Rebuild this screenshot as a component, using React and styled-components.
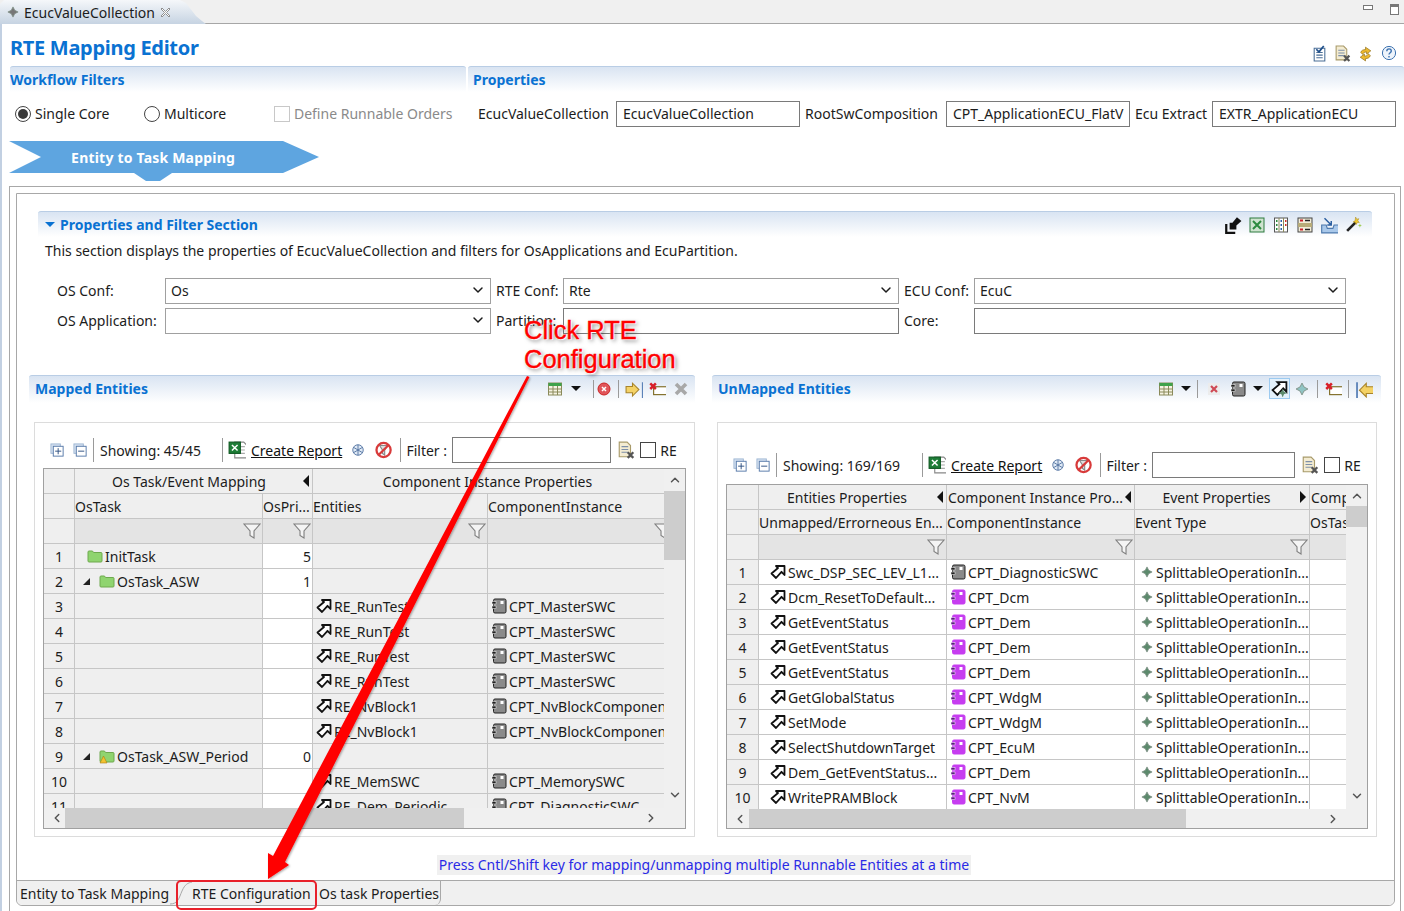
import React from 'react'
import styled, { createGlobalStyle } from 'styled-components'
import { ChevronDown, ChevronUp, ChevronLeft, ChevronRight } from 'lucide-react'

const Global = createGlobalStyle`
  html, body { margin: 0; padding: 0; background: #fff; }
  body { font-family: "Noto Sans", "Open Sans", sans-serif; font-size: 14px; color: #1c1c1c; }
  * { box-sizing: border-box; }
`

const Page = styled.div`
  width: 1404px;
  height: 911px;
  position: relative;
  overflow: hidden;
  background: #fff;
`
const TabStrip = styled.div`
  height: 24px;
  background: #f0f0f0;
  border-bottom: 1px solid #a6a6a6;
  display: flex;
  justify-content: space-between;
`
const EditorTab = styled.div`
  width: 206px;
  height: 24px;
  padding-left: 7px;
  display: flex;
  align-items: center;
  gap: 5px;
  background: linear-gradient(#f5f7fa, #c6d3e2);
  clip-path: polygon(0 4px, 4px 0, 180px 0, 186px 3px, 196px 16px, 202px 21px, 206px 24px, 0 24px);
  font-size: 14px;
`
const WindowButtons = styled.div`
  display: flex;
  gap: 17px;
  padding: 4px 5px 0 0;
`
const MinBtn = styled.div`
  width: 10px;
  height: 5px;
  margin-top: 1px;
  border: 1px solid #777;
  background: #fff;
`
const MaxBtn = styled.div`
  width: 9px;
  height: 11px;
  border: 1px solid #777;
  border-top-width: 3px;
  background: #fff;
`
const Editor = styled.div`
  height: 887px;
  border-left: 2px solid #c2d0e2;
  padding-left: 7px;
  display: flex;
  flex-direction: column;
  & > * { flex: none; }
`
const EditorHead = styled.div`
  height: 42px;
  display: flex;
  align-items: center;
  justify-content: space-between;
  padding: 0 4px 0 1px;
`
const Title = styled.div`
  font-size: 20px;
  font-weight: 700;
  color: #0a72d2;
  letter-spacing: -0.3px;
  margin-top: 5px;
`
const HeadIcons = styled.div`
  display: flex;
  margin-top: 16px;
`
const TopRow = styled.div`
  display: flex;
  gap: 2px;
  margin-left: 1px;
`
const FiltersCol = styled.div`
  width: 456px;
`
const PropsCol = styled.div`
  flex: 1;
`
const SectionHead = styled.div`
  height: ${p => p.$h || 26}px;
  padding-left: ${p => p.$pad || 0}px;
  padding-bottom: ${p => (p.$h ? 2 : 0)}px;
  background: linear-gradient(#d9e4f2, #fff);
  border-top: 1px solid #b9cde5;
  border-radius: 3px 3px 0 0;
  display: flex;
  align-items: center;
  justify-content: space-between;
  font-weight: 700;
  color: #0a72d2;
`
const FilterRow = styled.div`
  height: 27px;
  margin-top: 8px;
  display: flex;
  align-items: center;
  padding-left: ${p => p.$pad}px;
`
const Radio = styled.span`
  width: 16px;
  height: 16px;
  border: 1px solid #444;
  border-radius: 50%;
  background: #fff;
  display: flex;
  align-items: center;
  justify-content: center;
  margin-right: 4px;
  &::after {
    content: '';
    width: 10px;
    height: 10px;
    border-radius: 50%;
    background: ${p => (p.$on ? '#3a3a3a' : 'transparent')};
  }
`
const RadioLabel = styled.span`
  width: ${p => p.$w}px;
`
const CheckBox = styled.span`
  width: 16px;
  height: 16px;
  flex: none;
  border: 1px solid ${p => (p.$off ? '#c8c8c8' : '#444')};
  background: #fff;
  margin-left: ${p => p.$ml || 0}px;
  margin-right: ${p => p.$mr || 4}px;
`
const Muted = styled.span`
  color: #8a8a8a;
`
const PropLabel = styled.span`
  width: ${p => p.$w}px;
  margin-right: 5px;
  white-space: nowrap;
  flex: none;
`
const FormLabel = styled.span`
  white-space: nowrap;
  margin-top: -2px;
`
const TextBox = styled.div`
  width: ${p => p.$w ? `${p.$w}px` : '100%'};
  height: ${p => p.$h || 26}px;
  border: 1px solid #7a7a7a;
  background: #fff;
  padding-left: ${p => p.$pad ?? 6}px;
  margin-right: ${p => p.$mr || 0}px;
  display: flex;
  align-items: center;
  overflow: hidden;
  white-space: nowrap;
  flex: none;
`
const Breadcrumb = styled.div`
  width: 310px;
  height: 40px;
  margin: 14px 0 0 0;
  padding: 0 84px 8px 0;
  background: #5ea5e0;
  color: #fff;
  font-weight: 700;
  letter-spacing: 0.2px;
  display: flex;
  align-items: center;
  justify-content: flex-end;
  clip-path: polygon(0 0, 274px 0, 310px 16px, 274px 32px, 163px 32px, 151px 40px, 137px 40px, 125px 32px, 0 32px, 32px 16px);
`
const OuterBox = styled.div`
  height: 730px;
  margin: 5px 3px 0 0;
  padding: 6px 5px 0 6px;
  border: 1px solid #a8a8a8;
`
const InnerBox = styled.div`
  height: 713px;
  border: 1px solid #a8a8a8;
  border-radius: 0 0 6px 6px;
  display: flex;
  flex-direction: column;
`
const InnerBody = styled.div`
  flex: 1;
  padding: 17px 0 0 12px;
  display: flex;
  flex-direction: column;
  border-bottom: 1px solid #a8a8a8;
`
const FilterSection = styled.div`
  margin: 0 22px 0 9px;
`
const SectionTitle = styled.span`
  display: flex;
  align-items: center;
  gap: 5px;
`
const Note = styled.div`
  padding: 0 0 0 7px;
  margin-top: 1px;
  height: 27px;
  line-height: 26px;
`
const SectionTools = styled.div`
  display: flex;
  padding-right: 7px;
`
const FormGrid = styled.div`
  display: grid;
  grid-template-columns: 103px 326px 62px 336px 65px 372px;
  grid-auto-rows: 26px;
  column-gap: 5px;
  row-gap: 4px;
  padding-left: 19px;
  margin-top: 13px;
  align-items: center;
`
const Select = styled.div`
  height: 26px;
  border: 1px solid #a0a0a0;
  background: #fff;
  padding: 0 4px 2px 5px;
  display: flex;
  align-items: center;
  justify-content: space-between;
`
const Panels = styled.div`
  display: flex;
  gap: 17px;
  margin-top: 41px;
`
const Panel = styled.div`
  width: ${p => p.$w}px;
`
const ToolRow = styled.div`
  display: flex;
  align-items: center;
  height: 20px;
  padding-right: ${p => p.$pr}px;
`
const Slot = styled.span`
  width: ${p => p.$w}px;
  display: flex;
  justify-content: center;
  align-items: center;
  flex: none;
`
const CountText = styled.span`
  width: ${p => p.$w}px;
  padding-left: 3px;
  white-space: nowrap;
  flex: none;
`
const Caret = styled.span`
  width: 0;
  height: 0;
  border-left: 5px solid transparent;
  border-right: 5px solid transparent;
  border-top: 5px solid ${p => p.$c || '#111'};
`
const Sep = styled.span`
  width: 1px;
  height: ${p => p.$h || 18}px;
  background: #9a9a9a;
  flex: none;
`
const Pressed = styled.span`
  display: flex;
  padding: 1px;
  background: #e4f1fb;
  border: 1px solid #9ccaf0;
`
const Card = styled.div`
  height: 415px;
  margin: 19px 0 0 ${p => p.$ml}px;
  width: ${p => p.$w}px;
  border: 1px solid #dcdcdc;
  padding: ${p => p.$top}px 8px 7px 8px;
  display: flex;
  flex-direction: column;
`
const GridTools = styled.div`
  height: 28px;
  padding-bottom: 2px;
  margin-bottom: ${p => p.$mb}px;
  display: flex;
  align-items: center;
  flex: none;
`
const ReportLink = styled.a`
  color: #111;
  text-decoration: underline;
  white-space: nowrap;
  margin: 0 8px 0 1px;
`
const Table = styled.div`
  flex: 1;
  border: 1px solid #a0a0a0;
  display: grid;
  grid-template-columns: 1fr 21px;
  grid-template-rows: ${p => p.$h}px 1fr;
  overflow: hidden;
`
const GridView = styled.div`
  overflow: hidden;
`
const Grid = styled.div`
  display: grid;
  grid-template-columns: ${p => p.$cols};
  grid-auto-rows: 25px;
  width: max-content;
`
const Cell = styled.div`
  height: 25px;
  border-right: 1px solid #c6c6c6;
  border-bottom: 1px solid #c6c6c6;
  background: ${p => p.$bg || '#fff'};
  display: flex;
  align-items: center;
  justify-content: ${p => p.$justify || 'flex-start'};
  padding-left: ${p => p.$pl || 0}px;
  padding-right: ${p => p.$pr || 0}px;
  gap: ${p => p.$gap ?? 2}px;
  white-space: nowrap;
  overflow: hidden;
  grid-column: ${p => p.$span ? `span ${p.$span}` : 'auto'};
`
const GroupLabel = styled.span`
  flex: 1;
  text-align: ${p => p.$align || 'center'};
  overflow: hidden;
`
const SideArrow = styled.span`
  width: 0;
  height: 0;
  flex: none;
  margin-right: 3px;
  border-top: 6px solid transparent;
  border-bottom: 6px solid transparent;
  ${p => (p.$dir === 'right' ? 'border-left: 6px solid #111;' : 'border-right: 6px solid #111;')}
`
const TreeToggle = styled.span`
  width: 0;
  height: 0;
  flex: none;
  margin-right: 7px;
  border-left: 7px solid transparent;
  border-bottom: 7px solid #222;
`
const VScroll = styled.div`
  background: #f0f0f0;
  display: flex;
  flex-direction: column;
  align-items: center;
  justify-content: space-between;
  position: relative;
  padding: 4px 0 6px;
  color: #555;
`
const VThumb = styled.div`
  position: absolute;
  left: 0;
  right: 0;
  top: ${p => p.$top}px;
  height: ${p => p.$h}px;
  background: #cdcdcd;
`
const HScroll = styled.div`
  background: #f0f0f0;
  display: flex;
  align-items: center;
  justify-content: space-between;
  position: relative;
  padding: 0 6px;
  color: #555;
`
const HThumb = styled.div`
  position: absolute;
  top: 0;
  bottom: 0;
  left: ${p => p.$left}px;
  width: ${p => p.$w}px;
  background: #cdcdcd;
`
const Corner = styled.div`
  background: #f0f0f0;
`
const Hint = styled.div`
  align-self: center;
  margin: 18px 0 0 -15px;
  padding: 0 2px;
  height: 20px;
  line-height: 20px;
  background: #f0f0f0;
  color: #2a2ae6;
`
const BottomTabs = styled.div`
  height: 24px;
  flex: none;
  background: #f0f0f0;
  border-radius: 0 0 6px 6px;
  display: flex;
  align-items: center;
  padding-left: 3px;
`
const BottomTab = styled.div`
  width: ${p => p.$w}px;
  height: 24px;
  padding-left: ${p => p.$pl || 0}px;
  display: flex;
  align-items: center;
  justify-content: space-between;
  white-space: nowrap;
  border-right: ${p => (p.$edge ? '1px solid #a8a8a8' : 'none')};
  border-radius: 0 0 6px 0;
`
const Callout = styled.div`
  position: absolute;
  left: 524px;
  top: 316px;
  font-family: "Liberation Sans", Arial, sans-serif;
  font-size: 25.5px;
  line-height: 29px;
  color: #f00;
  -webkit-text-stroke: 0.4px #f00;
  text-shadow: 0 0 2px #fff, 1px 1px 1px #fff, 2px 2px 4px rgba(0, 0, 0, 0.55);
`
const ArrowLayer = styled.svg`
  position: absolute;
  left: 0;
  top: 0;
  pointer-events: none;
`
const RedFrame = styled.div`
  position: absolute;
  left: 176px;
  top: 880px;
  width: 141px;
  height: 30px;
  border: 2px solid #e8202a;
  border-radius: 5px;
`

/* small drawn icons */
const Svg = ({ s = 16, children }) => (
  <svg width={s} height={s} viewBox="0 0 16 16" style={{ flex: 'none' }}>{children}</svg>
)
const Runnable = () => (
  <Svg><path d="M6 2h8.500v9l-3-3.200-5.500 6.200-4.500-4.500 6.500-5.500z" fill="#fff" stroke="#111" strokeWidth="1.800" strokeLinejoin="round" /></Svg>
)
const Comp = ({ purple }) => (
  <Svg>
    <rect x="2.500" y="1" width="12.500" height="14" rx="1.500" fill={purple ? '#c63df0' : '#8a8a8a'} stroke={purple ? '#c63df0' : '#222'} />
    <rect x="1" y="3.500" width="4" height="2.500" fill={purple ? '#5b1d80' : '#222'} stroke="#fff" strokeWidth=".5" />
    <rect x="1" y="8" width="4" height="2.500" fill={purple ? '#5b1d80' : '#222'} stroke="#fff" strokeWidth=".5" />
    <rect x="9.500" y="3" width="3" height="3" fill="#fff" />
  </Svg>
)
const Folder = ({ warn }) => (
  <Svg>
    <path d="M1 4a1 1 0 0 1 1-1h3.500l1 1.500H14a1 1 0 0 1 1 1V13a1 1 0 0 1-1 1H2a1 1 0 0 1-1-1z" fill="#8fd46f" stroke="#6ea94e" />
    {warn && <path d="M4.500 8l3.500 7H1z" fill="#f2c230" stroke="#a87c10" strokeWidth=".6" />}
  </Svg>
)
const Star = ({ s = 12, c = '#5c8a6c' }) => (
  <Svg s={s}><path d="M8 1.200l2.300 4.500 4.500 2.300-4.500 2.300-2.300 4.500-2.300-4.500-4.500-2.300 4.500-2.300z" fill={c} stroke="#7f8f85" strokeWidth="1" /></Svg>
)
const Funnel = () => (
  <Svg s={18}><path d="M1 2h16l-6 7v7l-4-2.500V9z" transform="scale(.89)" fill="#f4f4f4" stroke="#7f7f7f" strokeWidth="1.100" /></Svg>
)
const TableIcon = () => (
  <Svg>
    <rect x="1.500" y="2" width="13" height="12" fill="#f6f3e2" stroke="#8a8a5a" />
    <rect x="1.500" y="2" width="13" height="3" fill="#3fa24a" />
    <path d="M6 5v9M10.500 5v9M2 8h13M2 11h13" stroke="#8a8a5a" />
  </Svg>
)
const RedCircle = () => (
  <Svg><circle cx="8" cy="8" r="6" fill="#e0555a" stroke="#c22" /><path d="M6 6l4 4M10 6l-4 4" stroke="#fff" strokeWidth="1.500" /></Svg>
)
const ArrowTo = () => (
  <Svg s={18}>
    <path d="M1 6h6V3l6 6-6 6v-3H1z" transform="scale(.95)" fill="#f4d266" stroke="#a8842a" />
    <rect x="15" y="2" width="1.600" height="14" fill="#5b82b8" />
  </Svg>
)
const ArrowBack = () => (
  <Svg s={18}>
    <rect x="1" y="2" width="1.600" height="14" fill="#5b82b8" />
    <path d="M17 6h-7V3L4 9l6 6v-3h7z" fill="#f4d266" stroke="#a8842a" />
  </Svg>
)
const FlagX = () => (
  <Svg s={18}>
    <rect x="5" y="6" width="12" height="7" fill="#fff" stroke="#7d6a22" />
    <path d="M2 3l5 5M7 3L2 8" stroke="#d8202a" strokeWidth="2.200" />
  </Svg>
)
const GreyX = () => (
  <Svg><path d="M3 3l10 10M13 3L3 13" stroke="#a8a8a8" strokeWidth="3.600" /></Svg>
)
const RedXBox = () => (
  <Svg>
    <rect x="2" y="2" width="12" height="12" fill="#ececec" />
    <path d="M5 5l6 6M11 5l-6 6" stroke="#cf4a55" strokeWidth="2.200" />
  </Svg>
)
const RunnablePressed = () => (
  <Svg s={17}>
    <path d="M6 2h8.500v9l-3-3.200-5.500 6.200-4.500-4.500 6.500-5.500z" fill="#fff" stroke="#111" strokeWidth="1.700" />
    <path d="M11 8l1.200 3 3 1.200-3 1.200-1.200 3-1.200-3-3-1.200 3-1.200z" fill="#5c8a6c" />
  </Svg>
)
const TreeBtn = ({ minus }) => (
  <Svg s={15}>
    <rect x="1" y="1" width="10" height="10" fill="#d8e4f2" stroke="#9cb4d2" />
    <rect x="3.500" y="3.500" width="10.500" height="10.500" fill="#fff" stroke="#5578a8" />
    <path d={minus ? 'M5.500 8.700h6.500' : 'M5.500 8.700h6.500M8.700 5.500v6.500'} stroke="#2c4f80" />
  </Svg>
)
const Excel = () => (
  <Svg s={18}>
    <path d="M6 1h8l3 3v11H6z" fill="#fff" stroke="#888" />
    <path d="M8 5h7M8 8h7M8 11h7" stroke="#aaa" />
    <rect x="1" y="1" width="10" height="10" fill="#1e7d37" stroke="#0f5a22" />
    <path d="M3.500 3.500l5 5M8.500 3.500l-5 5" stroke="#fff" strokeWidth="1.300" />
  </Svg>
)
const Globe = () => (
  <Svg s={14}>
    <circle cx="8" cy="8" r="6" fill="#dfe9f5" stroke="#4e6f9e" />
    <path d="M3 5l10 6M3 11l10-6M8 2v12" stroke="#4e6f9e" />
  </Svg>
)
const Ban = () => (
  <Svg s={18}>
    <path d="M5 4h7l-2.500 4v4.500L7.500 11V8z" fill="#ddd" stroke="#888" />
    <circle cx="8.500" cy="8" r="6.300" fill="none" stroke="#d83a3a" strokeWidth="2" />
    <path d="M4 12.500l9-9" stroke="#d83a3a" strokeWidth="2" />
  </Svg>
)
const DocX = ({ s = 18 }) => (
  <Svg s={s}>
    <path d="M2 1h7l3 3v10H2z" fill="#f4ecd2" stroke="#a89a6a" />
    <path d="M4 5h6M4 7.500h6M4 10h6" stroke="#7d8fa8" />
    <path d="M9.500 10l5 5M14.500 10l-5 5" stroke="#555" strokeWidth="2" />
  </Svg>
)
const CheckDoc = () => (
  <Svg s={17}>
    <path d="M3 3h10v12H3z" fill="#fff" stroke="#4a6e96" />
    <path d="M5 7h6M5 9.500h6M5 12h6" stroke="#4a6e96" />
    <path d="M5 4l2.500 2.500L12 1" fill="none" stroke="#1f4f8a" strokeWidth="1.600" />
  </Svg>
)
const Sync = () => (
  <Svg s={17}>
    <path d="M8 2l5 3.500-4 3V6.500C6.500 6.500 5.500 8 5.500 9L3.500 7C4 5 6 4.300 8 4.300z" fill="#edb92d" stroke="#8a6a12" strokeWidth=".6" />
    <path d="M8 15l-5-3.500 4-3v2c2.500 0 3.500-1.500 3.500-2.500l2 2c-.5 2-2.500 2.800-4.500 2.800z" fill="#edb92d" stroke="#8a6a12" strokeWidth=".6" />
  </Svg>
)
const HelpIcon = () => (
  <Svg>
    <circle cx="8" cy="8" r="6.600" fill="#eef4fb" stroke="#3d72b0" />
    <path d="M5.800 6.200c0-3 4.500-3 4.500-.3 0 1.800-2.300 1.800-2.300 3.600M8 11v1.500" fill="none" stroke="#3d72b0" strokeWidth="1.400" />
  </Svg>
)
const Export = () => (
  <Svg s={18}>
    <path d="M2 7v8h8" fill="none" stroke="#111" strokeWidth="2" />
    <path d="M5 12V6h2.500l4-5 4 3.500-4.500 4V12z" fill="#111" />
  </Svg>
)
const ExcelBox = () => (
  <Svg>
    <rect x="1" y="1" width="14" height="14" fill="#cfe3cf" stroke="#2d7a3e" />
    <path d="M4 4l8 8M12 4l-8 8" stroke="#2d8a3e" strokeWidth="2" />
  </Svg>
)
const Columns = () => (
  <Svg>
    <rect x="1.500" y="1" width="13" height="14" fill="#fff" stroke="#555" />
    <path d="M6 1v14M10.500 1v14" stroke="#8a8a5a" />
    <path d="M3 4h1.500M3 8h1.500M3 12h1.500" stroke="#2d8a3e" strokeWidth="2" />
    <path d="M7.500 4H9M7.500 8H9M7.500 12H9" stroke="#2d5ea8" strokeWidth="2" />
    <path d="M12 4h1.500M12 8h1.500" stroke="#d0302a" strokeWidth="2" />
  </Svg>
)
const Rows = () => (
  <Svg>
    <rect x="1" y="1" width="14" height="14" fill="#f2edd8" stroke="#444" />
    <rect x="1" y="6" width="14" height="4" fill="#b8ac78" />
    <path d="M3 3.500h3M3 12.500h3" stroke="#c8202a" strokeWidth="2" />
    <path d="M8 3.500h5M8 12.500h5" stroke="#222" strokeWidth="1.300" />
  </Svg>
)
const Tray = () => (
  <Svg s={18}>
    <path d="M1.500 8h4l1 3h5l1-3h4v7h-15z" fill="#a9c8ea" stroke="#4d79ad" />
    <path d="M4 2l6 6M10 4.500V8H6.500" fill="none" stroke="#2a5ea0" strokeWidth="1.300" />
  </Svg>
)
const Wand = () => (
  <Svg s={17}>
    <path d="M2 14l8-8" stroke="#222" strokeWidth="2.500" />
    <path d="M10 1l1 2 2-.5-1 2 1.500 1.500-2 .2-1 1.800-.8-2-2-.5 1.800-1z" fill="#f0c830" stroke="#a88a20" strokeWidth=".5" />
    <path d="M14 7l.6 1.500 1.400.500-1.400.5-.6 1.500-.5-1.500-1.500-.5 1.500-.5z" fill="#9ecb50" />
  </Svg>
)
const CloseX = () => (
  <svg width="11" height="11" viewBox="0 0 11 11" style={{ flex: 'none' }}>
    <path d="M2 1l3.500 3.500L9 1l1 1-3.500 3.500L10 9l-1 1-3.500-3.500L2 10 1 9l3.500-3.500L1 2z" fill="#fff" stroke="#777" strokeWidth=".8" />
  </svg>
)
const TabCurve = () => (
  <svg width="22" height="24" viewBox="0 0 22 24" style={{ flex: 'none' }}>
    <path d="M0 23c8 0 9-6 12-13S18 2 22 1" fill="none" stroke="#a8a8a8" />
  </svg>
)

const GREY = '#efefef'
const FILTER = '#e4e4e4'

const mappedRows = [
  { folder: true, task: 'InitTask', pri: '5' },
  { folder: true, toggle: true, task: 'OsTask_ASW', pri: '1' },
  { ent: 'RE_RunTest', comp: 'CPT_MasterSWC' },
  { ent: 'RE_RunTest', comp: 'CPT_MasterSWC' },
  { ent: 'RE_RunTest', comp: 'CPT_MasterSWC' },
  { ent: 'RE_RunTest', comp: 'CPT_MasterSWC' },
  { ent: 'RE_NvBlock1', comp: 'CPT_NvBlockComponent' },
  { ent: 'RE_NvBlock1', comp: 'CPT_NvBlockComponent' },
  { folder: true, warn: true, toggle: true, task: 'OsTask_ASW_Period', pri: '0' },
  { ent: 'RE_MemSWC', comp: 'CPT_MemorySWC' },
  { ent: 'RE_Dem_Periodic', comp: 'CPT_DiagnosticSWC' },
]

const unmappedRows = [
  ['Swc_DSP_SEC_LEV_L1...', 'CPT_DiagnosticSWC', false],
  ['Dcm_ResetToDefault...', 'CPT_Dcm', true],
  ['GetEventStatus', 'CPT_Dem', true],
  ['GetEventStatus', 'CPT_Dem', true],
  ['GetEventStatus', 'CPT_Dem', true],
  ['GetGlobalStatus', 'CPT_WdgM', true],
  ['SetMode', 'CPT_WdgM', true],
  ['SelectShutdownTarget', 'CPT_EcuM', true],
  ['Dem_GetEventStatus...', 'CPT_Dem', true],
  ['WritePRAMBlock', 'CPT_NvM', true],
]

const Toolbar = ({ count, countWidth, filterWidth, mb }) => (
  <GridTools $mb={mb}>
    <Slot $w={28}><TreeBtn /></Slot>
    <Slot $w={18}><TreeBtn minus /></Slot>
    <Slot $w={8}><Sep $h={24} /></Slot>
    <CountText $w={countWidth}>Showing: {count}</CountText>
    <Sep $h={24} />
    <Slot $w={27}><Excel /></Slot>
    <ReportLink>Create Report</ReportLink>
    <Slot $w={16}><Globe /></Slot>
    <Slot $w={34}><Ban /></Slot>
    <Sep $h={24} />
    <Slot $w={51}>Filter :</Slot>
    <TextBox $w={filterWidth} $mr={5} />
    <Slot $w={20}><DocX /></Slot>
    <CheckBox $ml={4} />
    RE
  </GridTools>
)

const MappedTable = () => (
  <Table $h={339}>
    <GridView>
      <Grid $cols="31px 188px 50px 175px 200px">
        <Cell $bg={GREY} />
        <Cell $bg={GREY} $span={2} $pl={2}><GroupLabel>Os Task/Event Mapping</GroupLabel><SideArrow /></Cell>
        <Cell $bg={GREY} $span={2} $pr={25}><GroupLabel>Component Instance Properties</GroupLabel></Cell>
        <Cell $bg={GREY} />
        <Cell $bg={GREY}>OsTask</Cell>
        <Cell $bg={GREY}>OsPri...</Cell>
        <Cell $bg={GREY}>Entities</Cell>
        <Cell $bg={GREY}>ComponentInstance</Cell>
        <Cell $bg={GREY} />
        <Cell $bg={FILTER} $justify="flex-end" $pr={1}><Funnel /></Cell>
        <Cell $bg={FILTER} $justify="flex-end" $pr={1}><Funnel /></Cell>
        <Cell $bg={FILTER} $justify="flex-end" $pr={1}><Funnel /></Cell>
        <Cell $bg={FILTER} $justify="flex-end" $pr={15}><Funnel /></Cell>
        {mappedRows.map((r, i) => (
          <React.Fragment key={i}>
            <Cell $bg={GREY} $justify="center">{i + 1}</Cell>
            <Cell $bg={GREY} $pl={r.toggle ? 8 : 12}>
              {r.toggle && <TreeToggle />}
              {r.folder && <Folder warn={r.warn} />}
              {r.task}
            </Cell>
            <Cell $justify="flex-end" $pr={1}>{r.pri}</Cell>
            <Cell $bg={GREY} $pl={3}>{r.ent && <Runnable />}{r.ent}</Cell>
            <Cell $bg={GREY} $pl={3}>{r.comp && <Comp />}{r.comp}</Cell>
          </React.Fragment>
        ))}
      </Grid>
    </GridView>
    <VScroll>
      <VThumb $top={22} $h={69} />
      <ChevronUp size={14} strokeWidth={2.500} />
      <ChevronDown size={14} strokeWidth={2.500} />
    </VScroll>
    <HScroll>
      <HThumb $left={21} $w={399} />
      <ChevronLeft size={14} strokeWidth={2.500} />
      <ChevronRight size={14} strokeWidth={2.500} />
    </HScroll>
    <Corner />
  </Table>
)

const UnmappedTable = () => (
  <Table $h={324}>
    <GridView>
      <Grid $cols="32px 188px 188px 175px 100px">
        <Cell $bg={GREY} />
        <Cell $bg={GREY}><GroupLabel>Entities Properties</GroupLabel><SideArrow /></Cell>
        <Cell $bg={GREY} $pl={1}><GroupLabel $align="left">Component Instance Pro...</GroupLabel><SideArrow /></Cell>
        <Cell $bg={GREY}><GroupLabel>Event Properties</GroupLabel><SideArrow $dir="right" /></Cell>
        <Cell $bg={GREY} $pl={1}>Comp</Cell>
        <Cell $bg={GREY} />
        <Cell $bg={GREY}>Unmapped/Errorneous En...</Cell>
        <Cell $bg={GREY}>ComponentInstance</Cell>
        <Cell $bg={GREY}>Event Type</Cell>
        <Cell $bg={GREY}>OsTask</Cell>
        <Cell $bg={GREY} />
        <Cell $bg={FILTER} $justify="flex-end" $pr={1}><Funnel /></Cell>
        <Cell $bg={FILTER} $justify="flex-end" $pr={1}><Funnel /></Cell>
        <Cell $bg={FILTER} $justify="flex-end" $pr={1}><Funnel /></Cell>
        <Cell $bg={FILTER} />
        {unmappedRows.map((r, i) => (
          <React.Fragment key={i}>
            <Cell $bg={GREY} $justify="center">{i + 1}</Cell>
            <Cell $pl={11}><Runnable />{r[0]}</Cell>
            <Cell $pl={3}><Comp purple={r[2]} />{r[1]}</Cell>
            <Cell $pl={6} $gap={3}><Star />SplittableOperationIn...</Cell>
            <Cell />
          </React.Fragment>
        ))}
      </Grid>
    </GridView>
    <VScroll>
      <VThumb $top={21} $h={21} />
      <ChevronUp size={14} strokeWidth={2.500} />
      <ChevronDown size={14} strokeWidth={2.500} />
    </VScroll>
    <HScroll>
      <HThumb $left={22} $w={437} />
      <ChevronLeft size={14} strokeWidth={2.500} />
      <ChevronRight size={14} strokeWidth={2.500} />
    </HScroll>
    <Corner />
  </Table>
)

const App = () => (
  <Page>
    <Global />
    <TabStrip>
      <EditorTab><Star c="#777" />EcucValueCollection <CloseX /></EditorTab>
      <WindowButtons><MinBtn /><MaxBtn /></WindowButtons>
    </TabStrip>
    <Editor>
      <EditorHead>
        <Title>RTE Mapping Editor</Title>
        <HeadIcons>
          <Slot $w={23}><CheckDoc /></Slot>
          <Slot $w={23}><DocX s={17} /></Slot>
          <Slot $w={23}><Sync /></Slot>
          <Slot $w={23}><HelpIcon /></Slot>
        </HeadIcons>
      </EditorHead>
      <TopRow>
        <FiltersCol>
          <SectionHead>Workflow Filters</SectionHead>
          <FilterRow $pad={5}>
            <Radio $on /><RadioLabel $w={109}>Single Core</RadioLabel>
            <Radio /><RadioLabel $w={110}>Multicore</RadioLabel>
            <CheckBox $off /><Muted>Define Runnable Orders</Muted>
          </FilterRow>
        </FiltersCol>
        <PropsCol>
          <SectionHead $pad={5}>Properties</SectionHead>
          <FilterRow $pad={10}>
            <PropLabel $w={133}>EcucValueCollection</PropLabel>
            <TextBox $w={184} $mr={5}>EcucValueCollection</TextBox>
            <PropLabel $w={136}>RootSwComposition</PropLabel>
            <TextBox $w={184} $mr={5}>CPT_ApplicationECU_FlatV</TextBox>
            <PropLabel $w={72}>Ecu Extract</PropLabel>
            <TextBox $w={184}>EXTR_ApplicationECU</TextBox>
          </FilterRow>
        </PropsCol>
      </TopRow>
      <Breadcrumb>Entity to Task Mapping</Breadcrumb>
      <OuterBox>
        <InnerBox>
          <InnerBody>
            <FilterSection>
              <SectionHead $pad={7}>
                <SectionTitle><Caret $c="#0a72d2" />Properties and Filter Section</SectionTitle>
                <SectionTools>
                  <Slot $w={24}><Export /></Slot>
                  <Slot $w={24}><ExcelBox /></Slot>
                  <Slot $w={24}><Columns /></Slot>
                  <Slot $w={24}><Rows /></Slot>
                  <Slot $w={24}><Tray /></Slot>
                  <Slot $w={24}><Wand /></Slot>
                </SectionTools>
              </SectionHead>
              <Note>This section displays the properties of EcucValueCollection and filters for OsApplications and EcuPartition.</Note>
              <FormGrid>
                <FormLabel>OS Conf:</FormLabel>
                <Select>Os<ChevronDown size={16} strokeWidth={2.200} /></Select>
                <FormLabel>RTE Conf:</FormLabel>
                <Select>Rte<ChevronDown size={16} strokeWidth={2.200} /></Select>
                <FormLabel>ECU Conf:</FormLabel>
                <Select>EcuC<ChevronDown size={16} strokeWidth={2.200} /></Select>
                <FormLabel>OS Application:</FormLabel>
                <Select><span /><ChevronDown size={16} strokeWidth={2.200} /></Select>
                <FormLabel>Partition:</FormLabel>
                <TextBox />
                <FormLabel>Core:</FormLabel>
                <TextBox />
              </FormGrid>
            </FilterSection>
            <Panels>
              <Panel $w={666}>
                <SectionHead $h={28} $pad={6}>
                  Mapped Entities
                  <ToolRow $pr={6}>
                    <Slot $w={20}><TableIcon /></Slot>
                    <Slot $w={22}><Caret /></Slot>
                    <Slot $w={12}><Sep /></Slot>
                    <Slot $w={10}><RedCircle /></Slot>
                    <Slot $w={18}><Sep /></Slot>
                    <Slot $w={14}><ArrowTo /></Slot>
                    <Slot $w={32}><FlagX /></Slot>
                    <Slot $w={16}><GreyX /></Slot>
                  </ToolRow>
                </SectionHead>
                <Card $ml={5} $w={661} $top={14}>
                  <Toolbar count="45/45" countWidth={125} filterWidth={159} mb={3} />
                  <MappedTable />
                </Card>
              </Panel>
              <Panel $w={669}>
                <SectionHead $h={28} $pad={6}>
                  UnMapped Entities
                  <ToolRow $pr={2}>
                    <Slot $w={20}><TableIcon /></Slot>
                    <Slot $w={20}><Caret /></Slot>
                    <Slot $w={2}><Sep /></Slot>
                    <Slot $w={32}><RedXBox /></Slot>
                    <Slot $w={16}><Comp /></Slot>
                    <Slot $w={24}><Caret /></Slot>
                    <Slot $w={18}><Pressed><RunnablePressed /></Pressed></Slot>
                    <Slot $w={28}><Star s={14} c="#8fc4c4" /></Slot>
                    <Slot $w={2}><Sep /></Slot>
                    <Slot $w={29}><FlagX /></Slot>
                    <Slot $w={2}><Sep /></Slot>
                    <Slot $w={30}><ArrowBack /></Slot>
                  </ToolRow>
                </SectionHead>
                <Card $ml={5} $w={660} $top={29}>
                  <Toolbar count="169/169" countWidth={142} filterWidth={143} mb={4} />
                  <UnmappedTable />
                </Card>
              </Panel>
            </Panels>
            <Hint>Press Cntl/Shift key for mapping/unmapping multiple Runnable Entities at a time</Hint>
          </InnerBody>
          <BottomTabs>
            <BottomTab $w={172}>Entity to Task Mapping<TabCurve /></BottomTab>
            <BottomTab $w={127}>RTE Configuration</BottomTab>
            <BottomTab $w={122} $edge>Os task Properties</BottomTab>
          </BottomTabs>
        </InnerBox>
      </OuterBox>
    </Editor>
    <ArrowLayer width="1404" height="911" viewBox="0 0 1404 911">
      <defs>
        <filter id="glow" x="-10%" y="-10%" width="120%" height="120%">
          <feDropShadow dx="1" dy="1" stdDeviation="1.200" floodColor="#000" floodOpacity=".35" />
        </filter>
      </defs>
      <path d="M527 376L529.500 377L285 862L289 865L268 879L268 853L273 856z" fill="#f00" filter="url(#glow)" />
    </ArrowLayer>
    <Callout>Click RTE<br />Configuration</Callout>
    <RedFrame />
  </Page>
)

export default App
